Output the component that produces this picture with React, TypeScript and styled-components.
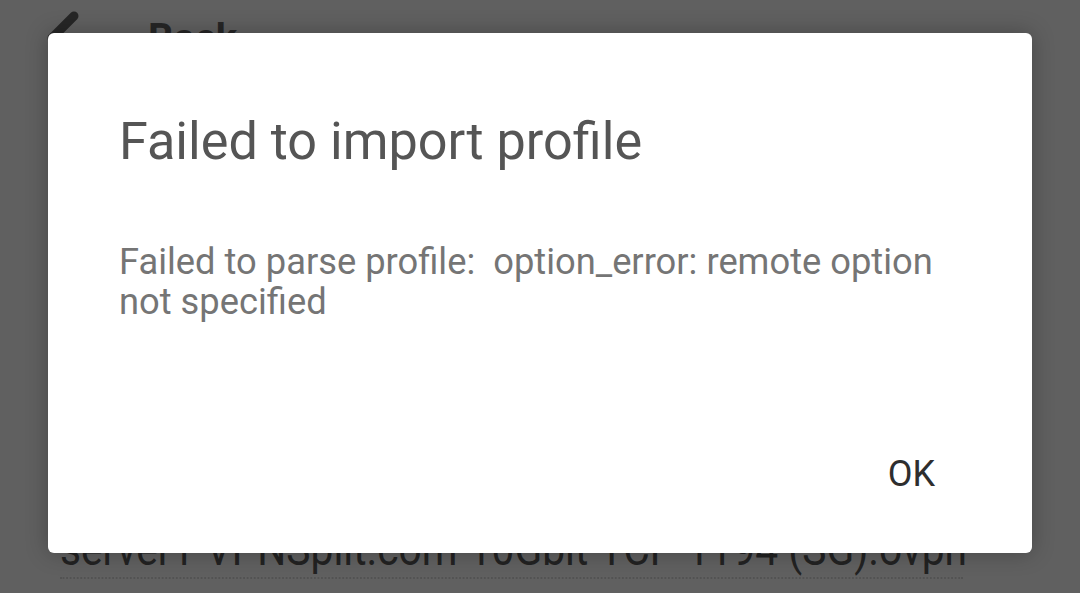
import React from "react";
import styled, { createGlobalStyle } from "styled-components";

const Global = createGlobalStyle`
  html, body { margin: 0; padding: 0; background: #606060; }
  body { font-family: Roboto, "Noto Sans", sans-serif; }
`;

const Screen = styled.div`
  position: relative;
  width: 1080px;
  height: 593px;
  overflow: hidden;
  background: #606060;
  display: flex;
  flex-direction: column;
`;

const AppBar = styled.div`
  display: flex;
  align-items: center;
  gap: 44px;
  padding: 10px 0 0 44px;
  height: 60px;
  box-sizing: border-box;
`;

const BackLabel = styled.span`
  font-family: Roboto, sans-serif;
  font-weight: 700;
  font-size: 40px;
  color: #262626;
  line-height: 1;
  margin-top: 8px;
`;

const ListArea = styled.div`
  flex: 1;
  display: flex;
  flex-direction: column;
  justify-content: flex-end;
  padding: 0 0 14px 60px;
`;

const FileName = styled.div`
  font-family: Roboto, sans-serif;
  font-size: 46px;
  line-height: 48px;
  color: #222222;
  transform: scaleX(0.885);
  transform-origin: left center;
  white-space: nowrap;
  border-bottom: 2px dotted rgba(30, 30, 30, 0.2);
  width: 1020px;
  padding-bottom: 4px;
`;

const Dialog = styled.div`
  position: absolute;
  left: 48px;
  top: 33px;
  width: 984px;
  height: 520px;
  box-sizing: border-box;
  background: #ffffff;
  border-radius: 6px;
  box-shadow: 0 0 22px rgba(0, 0, 0, 0.28);
  display: flex;
  flex-direction: column;
  padding: 78px 60px 0 71px;
`;

const Title = styled.h1`
  margin: 0;
  font-family: Roboto, sans-serif;
  font-weight: 400;
  font-size: 52.2px;
  line-height: 61px;
  color: #555555;
`;

const Message = styled.p`
  margin: 70px 0 0 0;
  font-family: Roboto, sans-serif;
  font-weight: 400;
  font-size: 36.3px;
  line-height: 40px;
  color: #757575;
  white-space: pre-wrap;
`;

const Actions = styled.div`
  margin-top: auto;
  display: flex;
  justify-content: flex-end;
  padding: 0 37px 58px 0;
`;

const Button = styled.button`
  border: none;
  background: transparent;
  padding: 0;
  font-family: Roboto, sans-serif;
  font-weight: 400;
  font-size: 36px;
  line-height: 42px;
  color: #2e2e2e;
  cursor: pointer;
`;

const BackArrow = () => (
  <svg width="60" height="50" viewBox="0 0 60 50">
    <path
      d="M30 6 L8 28 L30 50 M8 28 L58 28"
      fill="none"
      stroke="#262626"
      strokeWidth="9"
      strokeLinecap="round"
      strokeLinejoin="round"
    />
  </svg>
);

export default function App() {
  return (
    <>
      <Global />
      <Screen>
        <AppBar>
          <BackArrow />
          <BackLabel>Back</BackLabel>
        </AppBar>
        <ListArea>
          <FileName>server1-VPNSplit.com-10Gbit-TCP-1194 (SG).ovpn</FileName>
        </ListArea>
        <Dialog role="dialog">
          <Title>Failed to import profile</Title>
          <Message>{"Failed to parse profile:  option_error: remote option\nnot specified"}</Message>
          <Actions>
            <Button>OK</Button>
          </Actions>
        </Dialog>
      </Screen>
    </>
  );
}
